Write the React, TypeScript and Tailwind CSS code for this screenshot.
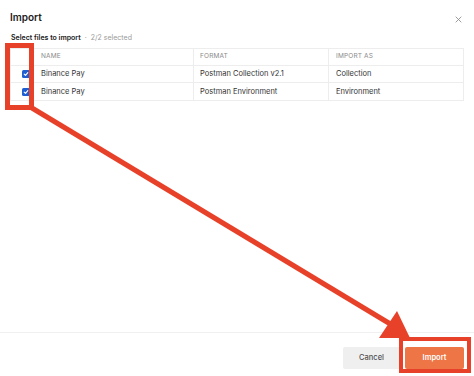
import React from "react";

const rows = [
  { name: "Binance Pay", format: "Postman Collection v2.1", as: "Collection" },
  { name: "Binance Pay", format: "Postman Environment", as: "Environment" },
];

const Checkbox: React.FC = () => (
  <span className="w-[8px] h-[8px] rounded-[1.5px] bg-[#1f5fd1] flex items-center justify-center">
    <svg width="6" height="6" viewBox="0 0 10 10">
      <path d="M2 5.2 L4.2 7.2 L8 2.8" fill="none" stroke="white" strokeWidth="1.8" strokeLinecap="round" strokeLinejoin="round" />
    </svg>
  </span>
);

const App: React.FC = () => {
  return (
    <div
      className="relative w-[474px] h-[376px] bg-white flex flex-col overflow-hidden"
      style={{ fontFamily: "Inter, 'Liberation Sans', sans-serif" }}
    >
      <div className="flex items-center justify-between pl-[10px] pr-[12px] pt-[9px] h-[25px]">
        <h1 className="text-[10px] font-semibold text-[#212121]">Import</h1>
        <svg width="7" height="7" viewBox="0 0 10 10" className="mt-[4px]">
          <path d="M1 1 L9 9 M9 1 L1 9" stroke="#8a8a8a" strokeWidth="1.2" />
        </svg>
      </div>

      <div className="pl-[11px] pt-[7px] h-[17px] text-[7px] leading-none flex items-center gap-[4px]">
        <span className="font-semibold text-[#212121]">Select files to import</span>
        <span className="text-[#9a9a9a]">·</span>
        <span className="text-[#9a9a9a]">2/2 selected</span>
      </div>

      <div className="mt-[6px] ml-[10px] w-[454px] border border-[#ededed] text-[7.5px] text-[#333]">
        <div className="grid grid-cols-[30px_152px_135px_1fr] h-[17px] items-center border-b border-[#ededed]">
          <div />
          <div className="text-[6.5px] text-[#8a8a8a] tracking-wide">NAME</div>
          <div className="h-full flex items-center pl-[6px] border-l border-[#ededed] text-[6.5px] text-[#8a8a8a] tracking-wide">FORMAT</div>
          <div className="h-full flex items-center pl-[7px] border-l border-[#ededed] text-[6.5px] text-[#8a8a8a] tracking-wide">IMPORT AS</div>
        </div>
        {rows.map((r, i) => (
          <div
            key={i}
            className={`grid grid-cols-[30px_152px_135px_1fr] h-[17px] items-center ${i === 0 ? "border-b border-[#ededed]" : ""}`}
          >
            <div className="flex justify-center">
              <Checkbox />
            </div>
            <div>{r.name}</div>
            <div className="h-full flex items-center pl-[6px] border-l border-[#ededed]">{r.format}</div>
            <div className="h-full flex items-center pl-[7px] border-l border-[#ededed]">{r.as}</div>
          </div>
        ))}
      </div>

      <div className="flex-1" />

      <div className="border-t border-[#f0f0f0] h-[44px] flex items-start justify-end gap-[5px] pr-[10px] pt-[14px]">
        <button className="w-[57px] h-[22px] rounded-[2px] bg-[#efefef] text-[7.5px] font-medium text-[#505050]">
          Cancel
        </button>
        <button className="w-[59px] h-[22px] rounded-[2px] bg-[#ee7545] text-[7.5px] font-semibold text-white">
          Import
        </button>
      </div>

      <svg className="absolute inset-0 pointer-events-none" width="474" height="376" viewBox="0 0 474 376">
        <rect x="7.5" y="45.5" width="24" height="62" fill="none" stroke="#e8412a" strokeWidth="5" />
        <line x1="32" y1="108" x2="392" y2="325" stroke="#e8412a" strokeWidth="5" />
        <polygon points="410,338 379,338 397,311" fill="#e8412a" />
        <rect x="401" y="339" width="68" height="32" fill="none" stroke="#e8412a" strokeWidth="4" />
      </svg>
    </div>
  );
};

export default App;
